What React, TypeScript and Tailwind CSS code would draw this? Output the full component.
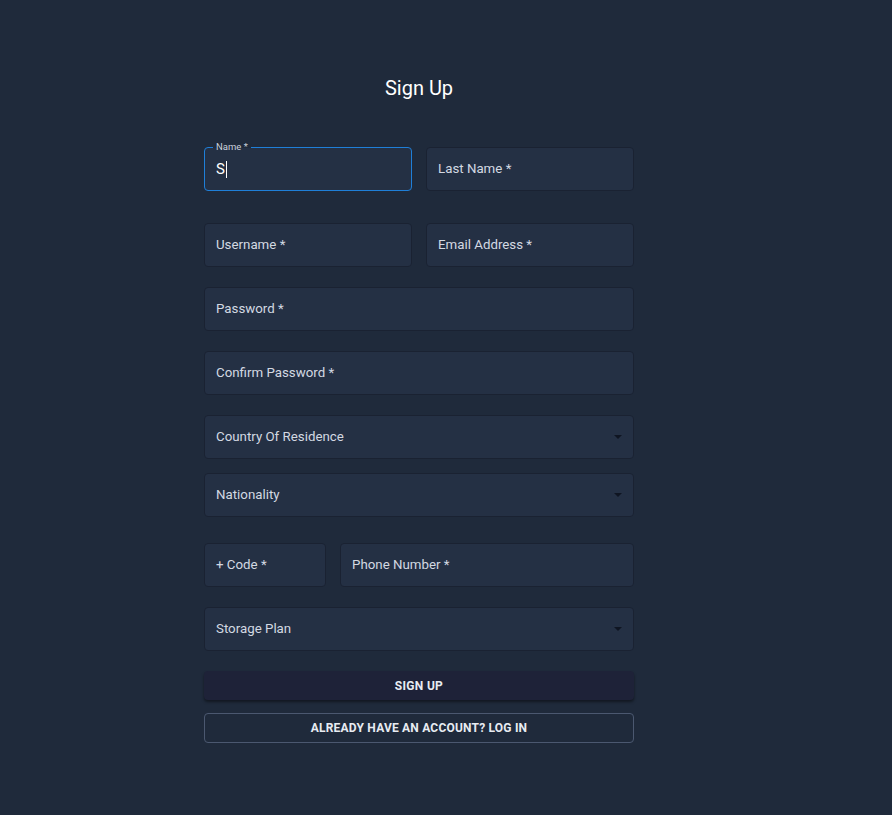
import React from "react";

function Arrow() {
  return (
    <svg width="8" height="4" viewBox="0 0 8 4" className="shrink-0">
      <path d="M0 0 L8 0 L4 4 Z" fill="#0f1522" />
    </svg>
  );
}

function Field({ label, className = "", select = false }: { label: string; className?: string; select?: boolean }) {
  return (
    <div
      className={`h-[44px] rounded-[4px] border border-[#1a2232] bg-[#243044] flex items-center justify-between pl-[11px] pr-[11px] ${className}`}
    >
      <span className="text-[13.3px] text-[#d3d9e2]">{label}</span>
      {select && <Arrow />}
    </div>
  );
}

export default function App() {
  return (
    <div
      className="min-h-[815px] w-full bg-[#1f2a3b] pt-[74px]"
      style={{ fontFamily: "Roboto, 'Liberation Sans', sans-serif" }}
    >
      <div className="ml-[204px] w-[430px] flex flex-col">
        <h1 className="text-center text-[20px] leading-[28px] text-white font-normal">Sign Up</h1>

        <div className="mt-[45px] flex gap-[14px]">
          <div className="relative h-[44px] w-[208px] rounded-[4px] border border-[#1f7fd8] bg-[#243044] flex items-center pl-[11px]">
            <span className="absolute -top-[7px] left-[8px] px-[3px] text-[9.5px] leading-[12px] text-[#c9d0da] bg-[linear-gradient(to_bottom,#1f2a3b_58%,#243044_58%)]">
              Name *
            </span>
            <span className="text-[15px] text-white">S</span>
            <span className="ml-[1px] h-[17px] w-[1px] bg-white" />
          </div>
          <Field label="Last Name *" className="flex-1" />
        </div>

        <div className="mt-[32px] flex gap-[14px]">
          <Field label="Username *" className="w-[208px]" />
          <Field label="Email Address *" className="flex-1" />
        </div>

        <Field label="Password *" className="mt-[20px]" />
        <Field label="Confirm Password *" className="mt-[20px]" />
        <Field label="Country Of Residence" className="mt-[20px]" select />
        <Field label="Nationality" className="mt-[14px]" select />

        <div className="mt-[26px] flex gap-[14px]">
          <Field label="+ Code *" className="w-[122px]" />
          <Field label="Phone Number *" className="flex-1" />
        </div>

        <Field label="Storage Plan" className="mt-[20px]" select />

        <button className="mt-[20px] h-[29px] w-full rounded-[4px] bg-[#1e2238] text-[12px] font-bold tracking-[0.3px] text-[#e8ecf2] shadow-[0_2px_3px_rgba(0,0,0,0.45)]">
          SIGN UP
        </button>
        <button className="mt-[13px] h-[30px] w-full rounded-[4px] border border-[#4b5870] bg-transparent text-[12px] font-bold tracking-[0.2px] text-[#e8ecf2]">
          ALREADY HAVE AN ACCOUNT? LOG IN
        </button>
      </div>
    </div>
  );
}
